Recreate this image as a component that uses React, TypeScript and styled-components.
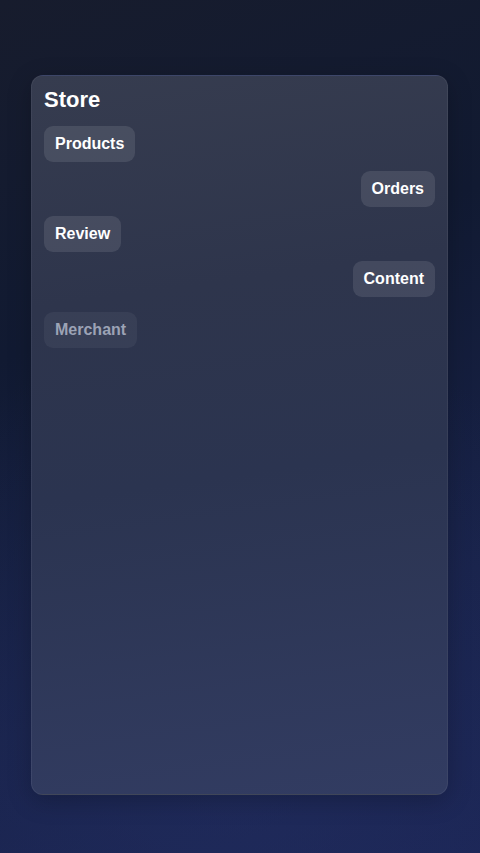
import styled, { createGlobalStyle } from "styled-components"

const GlobalStyle = createGlobalStyle`
  html, body {
    margin: 0;
    padding: 0;
    background: #151c36;
  }
  * {
    box-sizing: border-box;
  }
`

const Page = styled.div`
  width: 480px;
  height: 853px;
  padding: 75px 32px 58px 31px;
  font-family: "Liberation Sans", Arial, sans-serif;
  background:
    radial-gradient(circle at 50% 90%, rgba(36, 48, 100, 0.5), transparent 55%),
    linear-gradient(160deg, #171c2d 0%, #111a32 35%, #182249 72%, #1b2555 100%);
`

const Card = styled.section`
  height: 720px;
  padding: 12px;
  border-radius: 12px;
  border: 1px solid rgba(255, 255, 255, 0.06);
  background: linear-gradient(172deg, #363c4f 0%, #2e354c 30%, #2b3450 55%, #323c62 100%);
  box-shadow: 0 6px 24px rgba(0, 0, 0, 0.22);
  display: flex;
  flex-direction: column;
  gap: 9px;
`

const Title = styled.h1`
  margin: 0 0 5px;
  font-size: 22px;
  line-height: 24px;
  font-weight: 700;
  color: #ffffff;
`

const Chip = styled.div<{ $align?: "start" | "end"; $muted?: boolean }>`
  align-self: ${(p) => (p.$align === "end" ? "flex-end" : "flex-start")};
  padding: 9px 11px;
  border-radius: 9px;
  font-size: 16px;
  line-height: 18px;
  font-weight: 700;
  color: ${(p) => (p.$muted ? "#9ca3b5" : "#ffffff")};
  background: ${(p) => (p.$muted ? "rgba(255, 255, 255, 0.05)" : "rgba(255, 255, 255, 0.1)")};
  margin-top: ${(p) => (p.$muted ? "6px" : "0")};
`

const items = [
  { label: "Products", align: "start" as const },
  { label: "Orders", align: "end" as const },
  { label: "Review", align: "start" as const },
  { label: "Content", align: "end" as const },
  { label: "Merchant", align: "start" as const, muted: true },
]

export default function App() {
  return (
    <>
      <GlobalStyle />
      <Page>
        <Card>
          <Title>Store</Title>
          {items.map((item) => (
            <Chip key={item.label} $align={item.align} $muted={item.muted}>
              {item.label}
            </Chip>
          ))}
        </Card>
      </Page>
    </>
  )
}
